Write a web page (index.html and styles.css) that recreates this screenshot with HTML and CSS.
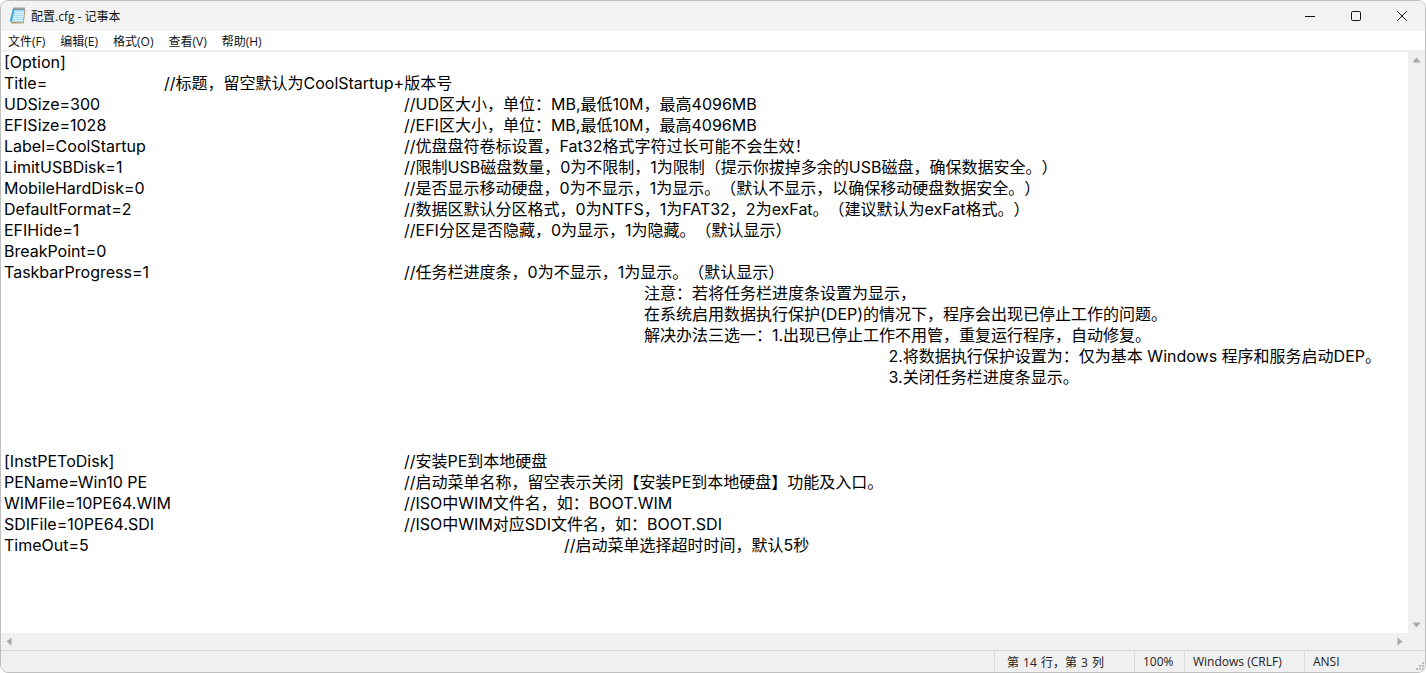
FILE: index.html
```html
<!DOCTYPE html>
<html lang="zh-CN">
<head>
<meta charset="utf-8">
<title>配置.cfg - 记事本</title>
<link rel="stylesheet" href="styles.css">
</head>
<body>
<div class="window">
  <header class="titlebar">
    <svg class="app-icon" width="18" height="18" viewBox="0 0 18 18">
      <path d="M6 3 L17.5 3 L15.7 16.5 L3 16.5 Z" fill="#b79a6b"/>
      <path d="M5 2 L16.5 2 L15 15.5 L1.5 14.5 Z" fill="#a9dcf0"/>
      <path d="M4.6 2.5 L1.8 14.5 L3.8 14.7 L6.6 2.5 Z" fill="#4aa5d6"/>
      <path d="M6.6 5.5h9.3M6.1 7.5h9.5M5.6 9.5h9.8M5.2 11.5h10M4.8 13.5h10.2" stroke="#d9f1fa" stroke-width="1"/>
      <path d="M6 .5v2.5M8 .5v2.5M10 .5v2.5M12 .5v2.5M14 .5v2.5M16 .5v2.5" stroke="#4a4f52" stroke-width="1"/>
    </svg>
    <span class="title">配置.cfg - 记事本</span>
    <div class="controls">
      <button class="ctl"><svg width="10" height="10" viewBox="0 0 10 10"><path d="M0 5.5h10" stroke="#111" stroke-width="1"/></svg></button>
      <button class="ctl"><svg width="10" height="10" viewBox="0 0 10 10"><rect x=".5" y=".5" width="9" height="9" rx="1.2" fill="none" stroke="#111" stroke-width="1"/></svg></button>
      <button class="ctl"><svg width="10" height="10" viewBox="0 0 10 10"><path d="M.3.3l9.4 9.4M9.7.3L.3 9.7" stroke="#111" stroke-width="1"/></svg></button>
    </div>
  </header>
  <nav class="menubar">
    <span class="menu">文件(F)</span>
    <span class="menu">编辑(E)</span>
    <span class="menu">格式(O)</span>
    <span class="menu">查看(V)</span>
    <span class="menu">帮助(H)</span>
  </nav>
  <div class="workspace">
    <div class="editor-row">
      <pre class="editor">[Option]
Title=		//标题，留空默认为CoolStartup+版本号
UDSize=300				//UD区大小，单位：MB,最低10M，最高4096MB
EFISize=1028				//EFI区大小，单位：MB,最低10M，最高4096MB
Label=CoolStartup				//优盘盘符卷标设置，Fat32格式字符过长可能不会生效！
LimitUSBDisk=1				//限制USB磁盘数量，0为不限制，1为限制（提示你拔掉多余的USB磁盘，确保数据安全。）
MobileHardDisk=0				//是否显示移动硬盘，0为不显示，1为显示。（默认不显示，以确保移动硬盘数据安全。）
DefaultFormat=2				//数据区默认分区格式，0为NTFS，1为FAT32，2为exFat。（建议默认为exFat格式。）
EFIHide=1					//EFI分区是否隐藏，0为显示，1为隐藏。（默认显示）
BreakPoint=0
TaskbarProgress=1				//任务栏进度条，0为不显示，1为显示。（默认显示）
								注意：若将任务栏进度条设置为显示，
								在系统启用数据执行保护(DEP)的情况下，程序会出现已停止工作的问题。
								解决办法三选一：1.出现已停止工作不用管，重复运行程序，自动修复。
											 2.将数据执行保护设置为：仅为基本 Windows 程序和服务启动DEP。
											 3.关闭任务栏进度条显示。



[InstPEToDisk]				//安装PE到本地硬盘
PEName=Win10 PE				//启动菜单名称，留空表示关闭【安装PE到本地硬盘】功能及入口。
WIMFile=10PE64.WIM			//ISO中WIM文件名，如：BOOT.WIM
SDIFile=10PE64.SDI				//ISO中WIM对应SDI文件名，如：BOOT.SDI
TimeOut=5						//启动菜单选择超时时间，默认5秒</pre>
      <div class="vscroll">
        <svg width="17" height="17" viewBox="0 0 17 17"><path d="M4.5 10.5L8.5 5.5L12.5 10.5Z" fill="#a6a6a6"/></svg>
        <svg width="17" height="17" viewBox="0 0 17 17"><path d="M4.5 6.5L8.5 11.5L12.5 6.5Z" fill="#a6a6a6"/></svg>
      </div>
    </div>
    <div class="hscroll">
      <svg width="17" height="17" viewBox="0 0 17 17"><path d="M10.5 4.5L5.5 8.5L10.5 12.5Z" fill="#a6a6a6"/></svg>
      <svg width="17" height="17" viewBox="0 0 17 17"><path d="M6.5 4.5L11.5 8.5L6.5 12.5Z" fill="#a6a6a6"/></svg>
    </div>
  </div>
  <footer class="statusbar">
    <span class="cell pos">第 14 行，第 3 列</span>
    <span class="cell zoom">100%</span>
    <span class="cell eol">Windows (CRLF)</span>
    <span class="cell enc">ANSI</span>
    <svg class="grip" width="12" height="12" viewBox="0 0 12 12"><path d="M9 2h2v2H9zM6 5h2v2H6zM9 5h2v2H9zM3 8h2v2H3zM6 8h2v2H6zM9 8h2v2H9z" fill="#bdbdbd"/></svg>
  </footer>
</div>
</body>
</html>
```
FILE: styles.css
```css
* { box-sizing: border-box; }
html, body { margin: 0; height: 100%; background: #fff; overflow: hidden; }
.window {
  width: 1426px;
  height: 673px;
  display: flex;
  flex-direction: column;
  border: 1px solid #bfbfbf;
  border-radius: 8px;
  overflow: hidden;
  background: #fff;
  font-family: "Open Sans", "Noto Sans CJK SC", sans-serif;
  color: #000;
  text-spacing-trim: space-all;
}
.titlebar {
  height: 30px;
  flex: none;
  display: flex;
  align-items: center;
  background: #f3f3f3;
  padding-left: 7px;
}
.app-icon { flex: none; }
.title { font-size: 12px; margin-left: 5px; color: #111; }
.controls { margin-left: auto; display: flex; height: 100%; }
.ctl {
  width: 46px;
  margin: 0;
  padding: 0;
  border: 0;
  background: none;
  display: flex;
  align-items: center;
  justify-content: center;
}
.menubar {
  height: 19px;
  flex: none;
  display: flex;
  align-items: center;
  gap: 15px;
  padding-left: 7px;
  background: #fff;
  font-size: 12px;
  color: #111;
}
.workspace {
  flex: 1;
  min-height: 0;
  display: flex;
  flex-direction: column;
  border-top: 2px solid #f0f0f0;
}
.editor-row { flex: 1; min-height: 0; display: flex; }
.editor {
  flex: 1;
  margin: 0;
  padding: 0 0 0 3px;
  font: 16px/21px "Inter", "Noto Sans CJK SC", sans-serif;
  tab-size: 80px;
  white-space: pre;
  overflow: hidden;
  background: #fff;
  color: #000;
}
.vscroll {
  width: 17px;
  flex: none;
  background: #f0f0f0;
  display: flex;
  flex-direction: column;
  justify-content: space-between;
}
.hscroll {
  height: 17px;
  flex: none;
  background: #f0f0f0;
  display: flex;
  justify-content: space-between;
  padding-right: 17px;
}
.statusbar {
  height: 22px;
  flex: none;
  display: flex;
  align-items: center;
  padding-left: 993px;
  background: #f0f0f0;
  border-top: 1px solid #d9d9d9;
  font-size: 12px;
  color: #222;
  position: relative;
}
.cell { height: 100%; display: flex; align-items: center; border-left: 1px solid #d9d9d9; padding-left: 12px; }
.pos { width: 140px; word-spacing: 1px; }
.zoom { width: 50px; padding-left: 8px; }
.eol { width: 120px; padding-left: 8px; }
.enc { width: 100px; padding-left: 8px; }
.grip { position: absolute; right: 0; bottom: 0; }
```
